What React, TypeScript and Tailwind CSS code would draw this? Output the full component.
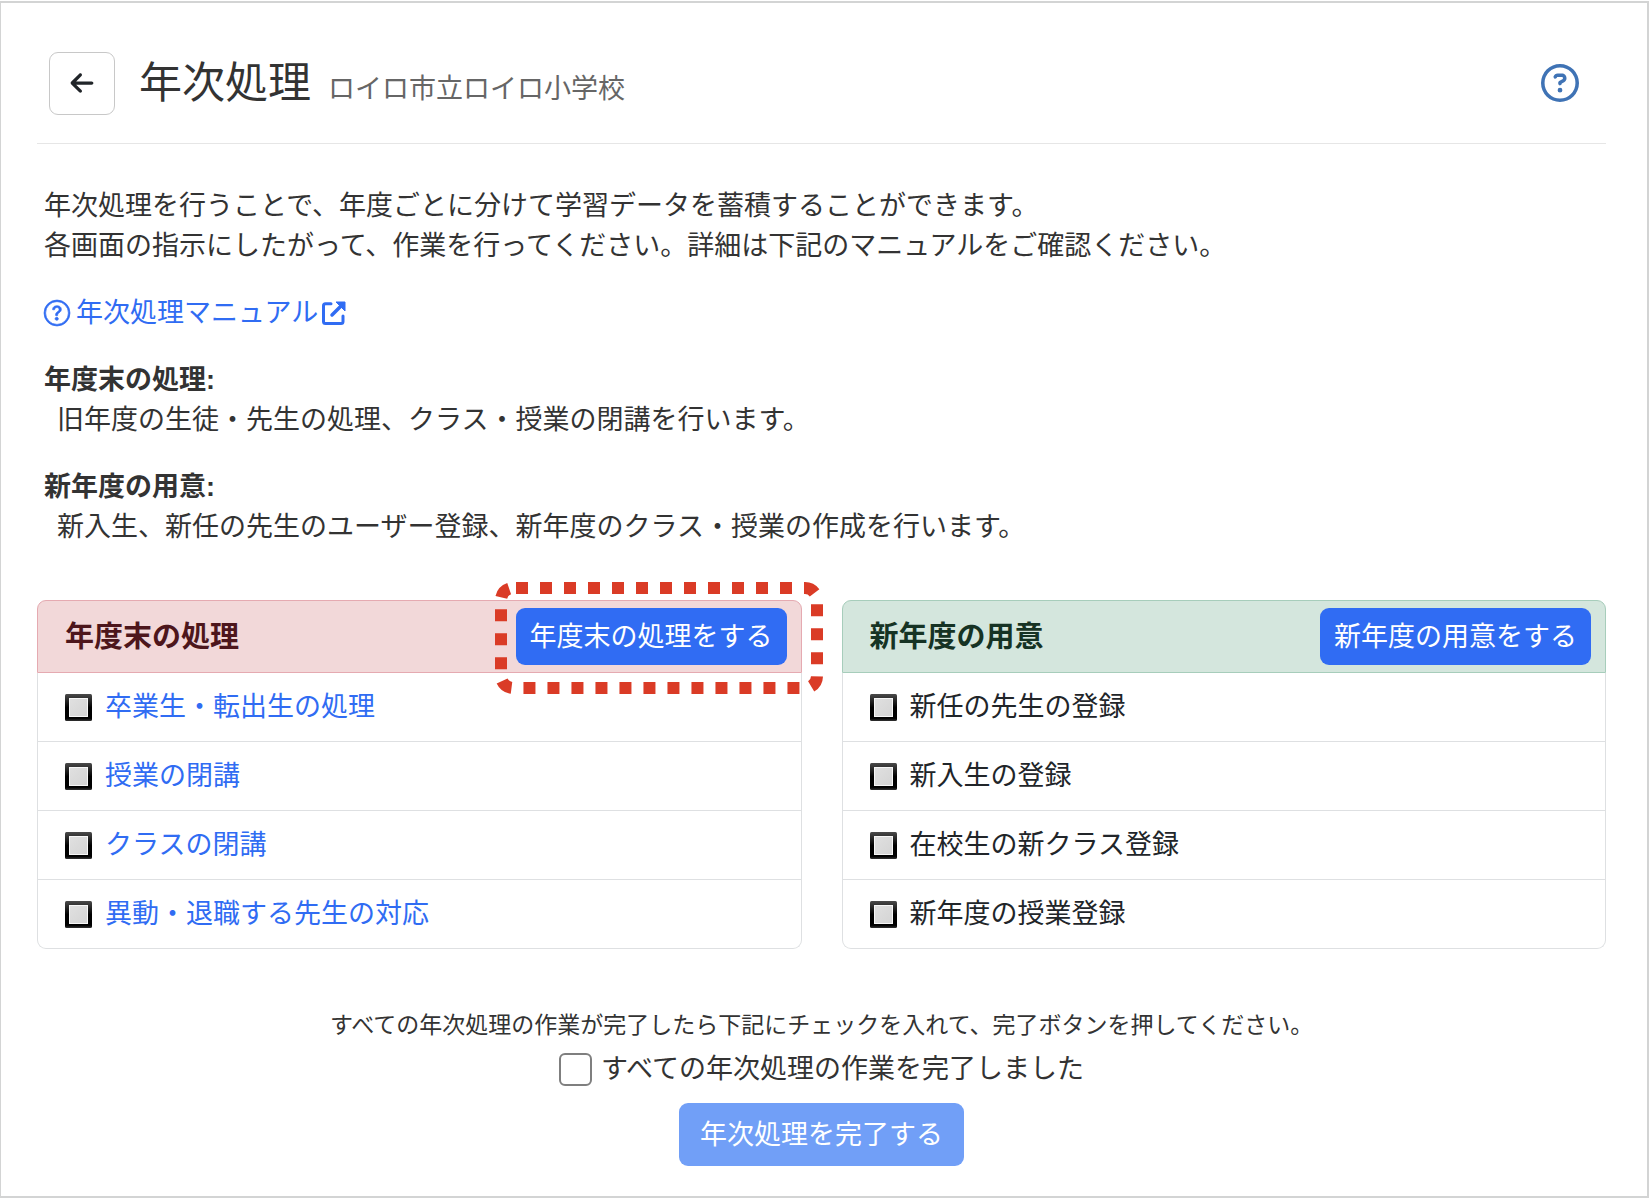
import { useState } from 'react';
import { FaArrowLeft, FaRegCircleQuestion } from 'react-icons/fa6';
import { BsQuestionCircle } from 'react-icons/bs';

const YEAR_END_TASKS = [
  '卒業生・転出生の処理',
  '授業の閉講',
  'クラスの閉講',
  '異動・退職する先生の対応',
];

const NEW_YEAR_TASKS = [
  '新任の先生の登録',
  '新入生の登録',
  '在校生の新クラス登録',
  '新年度の授業登録',
];

function ExternalLinkIcon() {
  return (
    <svg viewBox="0 0 24 24" className="size-6" fill="none" aria-hidden="true">
      <path
        d="M9 2.8H3.5a2 2 0 0 0-2 2V20.5a2 2 0 0 0 2 2H19a2 2 0 0 0 2-2V15"
        stroke="currentColor"
        strokeWidth="3"
        strokeLinecap="round"
      />
      <path
        d="M10 14 20 4"
        stroke="currentColor"
        strokeWidth="3.5"
        strokeLinecap="round"
      />
      <path
        d="M14 1H23v9z"
        fill="currentColor"
        stroke="currentColor"
        strokeLinejoin="round"
      />
    </svg>
  );
}

function TaskMark() {
  return (
    <svg viewBox="0 0 27 27" className="size-[27px] shrink-0" aria-hidden="true">
      <defs>
        <linearGradient id="mark-frame" x1="0" y1="0" x2="0" y2="1">
          <stop offset="0" stopColor="#4a4a4a" />
          <stop offset="0.5" stopColor="#000" />
          <stop offset="0.9" stopColor="#000" />
          <stop offset="1" stopColor="#333" />
        </linearGradient>
        <linearGradient id="mark-fill" x1="0" y1="0" x2="1" y2="1">
          <stop offset="0" stopColor="#e0e0e0" />
          <stop offset="1" stopColor="#d4d4d4" />
        </linearGradient>
      </defs>
      <rect width="27" height="27" rx="1.5" fill="url(#mark-frame)" />
      <rect x="4" y="4" width="19" height="19" fill="#f7f7f7" />
      <rect x="5" y="5" width="17" height="17" fill="url(#mark-fill)" />
    </svg>
  );
}

function Highlight() {
  return (
    <svg
      viewBox="0 0 328 112"
      className="pointer-events-none absolute -top-[26px] -left-[21px] z-10 h-[112px] w-[328px] max-w-none"
      fill="none"
      aria-hidden="true"
    >
      <path
        d="M21 6H310a12 12 0 0 1 12 12V94a12 12 0 0 1-12 12H18a12 12 0 0 1-12-12V18a12 12 0 0 1 12-12"
        stroke="#da3b26"
        strokeWidth="12"
        strokeDasharray="12 12"
      />
    </svg>
  );
}

function PrimaryButton({ label }: { label: string }) {
  return (
    <button
      type="button"
      className="h-[57px] rounded-[9px] bg-[#306cf3] px-3.5 whitespace-nowrap text-white"
    >
      {label}
    </button>
  );
}

export default function App() {
  const [completed, setCompleted] = useState<boolean>(false);

  return (
    <div className="flex min-h-screen flex-col bg-white pt-px pr-px pb-0.5 font-['Liberation_Sans','Noto_Sans_CJK_JP',sans-serif] text-[27px] leading-10 text-[#333]">
      <main className="flex-1 border-2 border-l border-[#d3d4d4] pt-12 pr-[41px] pb-6 pl-9">
        <header className="flex items-center border-b border-[#e6e6e6] pr-[27px] pb-7 pl-3">
          <button
            type="button"
            aria-label="戻る"
            className="flex h-[63px] w-[66px] items-center justify-center rounded-[9px] border border-[#c8c8c8] text-[#212529]"
          >
            <FaArrowLeft className="size-[26px]" />
          </button>
          <div className="ml-6 flex items-baseline gap-[17px]">
            <h1 className="text-[43px] leading-[64px]">年次処理</h1>
            <span className="text-[#666]">ロイロ市立ロイロ小学校</span>
          </div>
          <a href="#help" aria-label="ヘルプ" className="ml-auto text-[#3f73b5]">
            <FaRegCircleQuestion className="size-[38px]" />
          </a>
        </header>

        <section className="space-y-[27px] pt-[42px] pl-[7px]">
          <p>
            年次処理を行うことで、年度ごとに分けて学習データを蓄積することができます。
            <br />
            各画面の指示にしたがって、作業を行ってください。詳細は下記のマニュアルをご確認ください。
          </p>
          <a
            href="#manual"
            className="flex w-fit items-center gap-1 text-[#306cf3]"
          >
            <BsQuestionCircle
              className="mr-0.5 size-[26px] overflow-visible"
              stroke="currentColor"
              strokeWidth={0.4}
            />
            年次処理マニュアル
            <ExternalLinkIcon />
          </a>
          <dl>
            <dt className="font-bold">年度末の処理:</dt>
            <dd className="pl-[13px]">
              旧年度の生徒・先生の処理、クラス・授業の閉講を行います。
            </dd>
          </dl>
          <dl>
            <dt className="font-bold">新年度の用意:</dt>
            <dd className="pl-[13px]">
              新入生、新任の先生のユーザー登録、新年度のクラス・授業の作成を行います。
            </dd>
          </dl>
        </section>

        <div className="mt-[53px] grid grid-cols-2 gap-10">
          <section>
            <div className="flex h-[73px] items-center justify-between rounded-t-[9px] border border-[#e5aab1] bg-[#f2d8d9] pr-3.5 pl-[27px]">
              <h2 className="text-[29px] font-bold text-[#4d161c]">
                年度末の処理
              </h2>
              <div className="relative">
                <PrimaryButton label="年度末の処理をする" />
                <Highlight />
              </div>
            </div>
            <ul className="divide-y divide-[#dee0e2] rounded-b-[9px] border border-t-0 border-[#dee0e2]">
              {YEAR_END_TASKS.map((task) => (
                <li
                  key={task}
                  className="flex items-center gap-[13px] px-[27px] py-3.5"
                >
                  <TaskMark />
                  <a href="#year-end" className="text-[#306cf3]">
                    {task}
                  </a>
                </li>
              ))}
            </ul>
          </section>

          <section>
            <div className="flex h-[73px] items-center justify-between rounded-t-[9px] border border-[#a7cdbb] bg-[#d4e6dd] pr-3.5 pl-[27px]">
              <h2 className="text-[29px] font-bold text-[#163324]">
                新年度の用意
              </h2>
              <PrimaryButton label="新年度の用意をする" />
            </div>
            <ul className="divide-y divide-[#dee0e2] rounded-b-[9px] border border-t-0 border-[#dee0e2] text-[#212529]">
              {NEW_YEAR_TASKS.map((task) => (
                <li
                  key={task}
                  className="flex items-center gap-[13px] px-[27px] py-3.5"
                >
                  <TaskMark />
                  {task}
                </li>
              ))}
            </ul>
          </section>
        </div>

        <footer className="mt-14 flex flex-col items-center">
          <p className="text-[23px]">
            すべての年次処理の作業が完了したら下記にチェックを入れて、完了ボタンを押してください。
          </p>
          <label className="mt-1 flex items-center gap-[9px]">
            <input
              type="checkbox"
              checked={completed}
              onChange={(e) => setCompleted(e.target.checked)}
              className="size-[33px] appearance-none rounded-md border-2 border-[#7f7f7f] bg-white checked:bg-[#306cf3]"
            />
            すべての年次処理の作業を完了しました
          </label>
          <button
            type="button"
            disabled={!completed}
            className="mt-3.5 h-[63px] rounded-[9px] bg-[#306cf3] px-[21px] text-white disabled:bg-[#719ff7]"
          >
            年次処理を完了する
          </button>
        </footer>
      </main>
    </div>
  );
}
